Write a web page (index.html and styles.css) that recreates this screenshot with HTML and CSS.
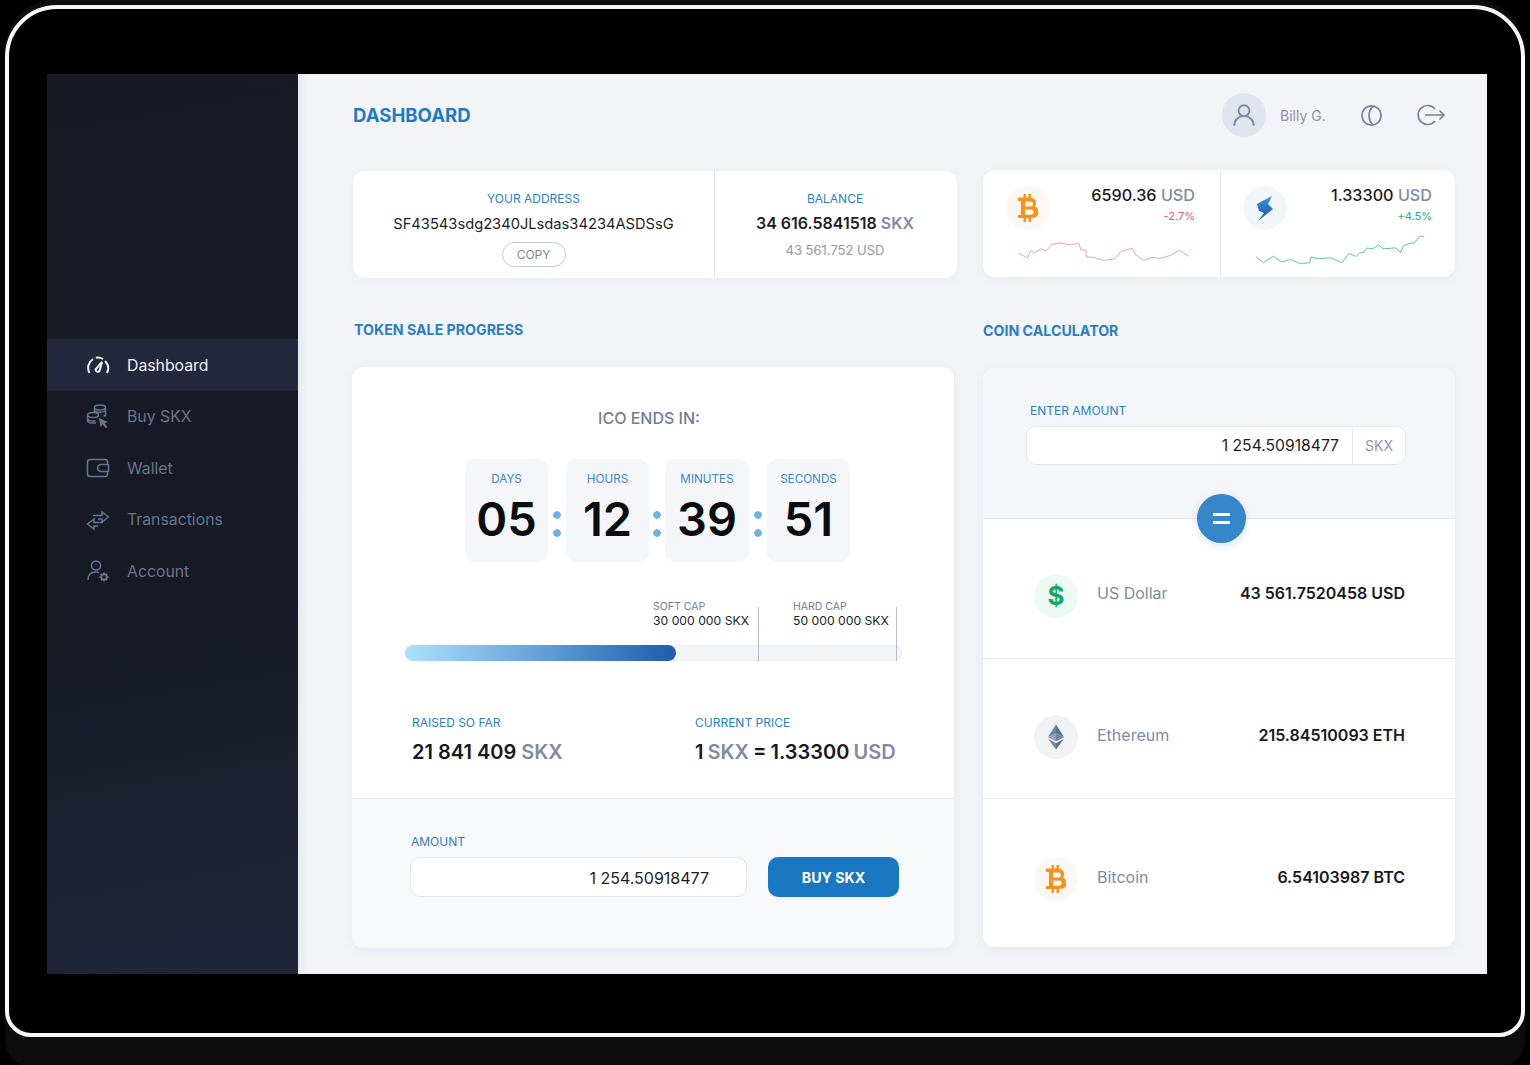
FILE: index.html
```html
<!DOCTYPE html>
<html lang="en">
<head>
<meta charset="utf-8">
<title>Dashboard</title>
<link rel="stylesheet" href="styles.css">
</head>
<body>
<div class="device">
  <div class="screen">
    <aside class="sidebar">
      <nav class="nav">
        <a class="nav-item active">
          <svg class="nav-icon nav-gauge" viewBox="0 0 24 24"><path d="M3.500 20A10.500 10.500 0 0 1 7 6M9.800 4.800a10.500 10.500 0 0 1 7.200 1.200M19 8a10.500 10.500 0 0 1 2 12"/><path d="M9.500 16.500 16 9l-2.500 9a2.300 2.300 0 0 1-4-1.500z"/></svg>
          <span>Dashboard</span>
        </a>
        <a class="nav-item">
          <svg class="nav-icon" viewBox="0 0 24 24"><ellipse cx="14" cy="3.500" rx="5.500" ry="2.500"/><path d="M8.500 3.500v5M19.500 3.500v9M8.500 7c1 1.500 8 2 11 0M19.500 11c-.5.5-1 1-2 1"/><ellipse cx="7" cy="11" rx="5.500" ry="2.500"/><path d="M1.500 11v5.500c0 1.500 2.500 2.500 5.500 2.500h3M1.500 14.500c0 1.500 3 2.500 6 2.500h2"/><path class="fill" d="m13 14 9 4-3.500 1.200 3 3.800-2 1.200-2.700-3.900L14.500 23z"/></svg>
          <span>Buy SKX</span>
        </a>
        <a class="nav-item">
          <svg class="nav-icon" viewBox="0 0 24 24"><path d="M21.500 8V6a2.500 2.500 0 0 0-2.500-2.500H4A2.500 2.500 0 0 0 1.500 6v12A2.500 2.500 0 0 0 4 20.500h15a2.500 2.500 0 0 0 2.500-2.500v-2"/><path d="M22.500 8.500H15a3.200 3.200 0 0 0 0 7h7.500z"/></svg>
          <span>Wallet</span>
        </a>
        <a class="nav-item">
          <svg class="nav-icon" viewBox="0 0 24 24"><path d="M7 8.500h9V5l6.500 5-6.500 5v-3h-4"/><path d="M17 15.500H8V12l-6.500 5L8 22v-3h4"/></svg>
          <span>Transactions</span>
        </a>
        <a class="nav-item">
          <svg class="nav-icon" viewBox="0 0 24 24"><circle cx="10" cy="6.500" r="4.500"/><path d="M2 21c0-5 3-8 8-8 1 0 2 .2 3 .5"/><circle class="thick" cx="18" cy="18" r="2.700"/><path class="thick" d="M18 13.500v2M18 20.500v2M13.500 18h2M20.500 18h2M14.800 14.800l1.400 1.400M19.800 19.800l1.400 1.400M14.800 21.200l1.400-1.400M19.800 16.200l1.400-1.400"/></svg>
          <span>Account</span>
        </a>
      </nav>
    </aside>
    <main class="main">
      <header class="topbar">
        <h1 class="page-title">DASHBOARD</h1>
        <div class="user">
          <span class="avatar">
            <svg viewBox="0 0 24 24" class="avatar-icon"><circle cx="12" cy="8" r="5"/><path d="M3 22c0-5.500 4-9 9-9s9 3.500 9 9"/></svg>
          </span>
          <span class="user-name">Billy G.</span>
          <svg class="moon" viewBox="0 0 24 24"><circle cx="12" cy="12" r="10"/><path d="M14 2.300c-6 3.500-6 16 0 19.400"/></svg>
          <svg class="logout" viewBox="0 0 30 22"><path d="M19 5A9.500 9.500 0 1 0 19 17"/><path d="M9 11h19M23.500 6.500 28 11l-4.500 4.500"/></svg>
        </div>
      </header>

      <div class="columns">
        <section class="col">
          <div class="card address-card">
            <div class="addr-cell addr-wide">
              <div class="label">YOUR ADDRESS</div>
              <div class="address">SF43543sdg2340JLsdas34234ASDSsG</div>
              <button class="copy">COPY</button>
            </div>
            <div class="addr-cell addr-narrow">
              <div class="label">BALANCE</div>
              <div class="balance">34 616.5841518 <span class="muted">SKX</span></div>
              <div class="balance-usd">43 561.752 USD</div>
            </div>
          </div>

          <h2 class="section-title left-title">TOKEN SALE PROGRESS</h2>

          <div class="panel sale-panel">
            <div class="sale-top">
              <div class="ends">ICO ENDS IN:</div>
              <div class="countdown">
                <div class="time-box"><span class="time-label">DAYS</span><span class="time-value">05</span></div>
                <span class="colon"></span>
                <div class="time-box"><span class="time-label">HOURS</span><span class="time-value">12</span></div>
                <span class="colon colon-tight"></span>
                <div class="time-box time-box-wide"><span class="time-label">MINUTES</span><span class="time-value">39</span></div>
                <span class="colon"></span>
                <div class="time-box"><span class="time-label">SECONDS</span><span class="time-value">51</span></div>
              </div>
              <div class="progress">
                <div class="caps">
                  <div class="cap cap-soft"><span class="cap-label">SOFT CAP</span><span class="cap-value">30 000 000 SKX</span></div>
                  <div class="cap cap-hard"><span class="cap-label">HARD CAP</span><span class="cap-value">50 000 000 SKX</span></div>
                </div>
                <div class="bar"><div class="bar-fill"></div></div>
              </div>
              <div class="stats">
                <div class="stat stat-raised">
                  <div class="label">RAISED SO FAR</div>
                  <div class="stat-value">21 841 409 <span class="muted">SKX</span></div>
                </div>
                <div class="stat stat-price">
                  <div class="label">CURRENT PRICE</div>
                  <div class="stat-value">1 <span class="muted">SKX</span> = 1.33300 <span class="muted">USD</span></div>
                </div>
              </div>
            </div>
            <div class="buy">
              <div class="label">AMOUNT</div>
              <div class="buy-row">
                <div class="amount-input">1 254.50918477</div>
                <button class="buy-btn">BUY SKX</button>
              </div>
            </div>
          </div>
        </section>

        <section class="col">
          <div class="card rates-card">
            <div class="rate rate-btc">
              <div class="rate-head">
                <span class="coin coin-btc"><svg class="btc" viewBox="0 0 20 28"><path fill-rule="evenodd" d="M5.500 0H8v3.500h2.500V0H13v3.800a5.300 5.300 0 0 1 3.800 8.700 5.700 5.700 0 0 1-3.800 11V28h-2.500v-4H8v4H5.500v-4H0v-3h3V7H0V3.500h5.500zM7 7.500v5h5.500a2.500 2.500 0 0 0 0-5zM7 15.500v5.200h6a2.600 2.600 0 0 0 0-5.200z"/></svg></span>
                <div class="rate-text">
                  <div class="rate-value">6590.36 <span class="muted">USD</span></div>
                  <div class="rate-change down">-2.7%</div>
                </div>
              </div>
              <svg class="spark spark-btc" viewBox="100 225 550 70"><polyline points="115,265 140,280 150,258 162,264 180,252 197,258 215,238 240,234 275,240 297,234 303,255 318,256 320,277 340,277 370,287 405,283 425,260 460,250 470,270 495,287 520,278 545,281 575,272 603,257 632,274"/></svg>
            </div>
            <div class="rate rate-skx">
              <div class="rate-head">
                <span class="coin coin-skx"><svg class="bolt" viewBox="0 0 16 25"><defs><linearGradient id="boltg" x1="0" y1="0" x2="0" y2="1"><stop offset="0" stop-color="#3a9ae0"/><stop offset="1" stop-color="#1b4f9c"/></linearGradient></defs><path fill="url(#boltg)" d="M15 0 0 8l2 7 5 2-6 8 15-12-5-5z"/></svg></span>
                <div class="rate-text">
                  <div class="rate-value">1.33300 <span class="muted">USD</span></div>
                  <div class="rate-change up">+4.5%</div>
                </div>
              </div>
              <svg class="spark spark-skx" viewBox="150 460 540 100"><polyline points="165,532 188,550 218,530 243,548 270,540 300,553 328,550 332,533 355,538 390,535 425,550 447,522 468,531 480,520 493,518 500,506 520,507 538,496 550,508 590,505 603,520 612,500 628,492 645,490 662,470 675,470"/></svg>
            </div>
          </div>

          <h2 class="section-title right-title">COIN CALCULATOR</h2>

          <div class="panel calc-panel">
            <div class="calc-top">
              <div class="label calc-label">ENTER AMOUNT</div>
              <div class="calc-input"><span class="calc-number">1 254.50918477</span><span class="calc-unit">SKX</span></div>
              <span class="equals"><span class="eq-line"></span><span class="eq-line"></span></span>
            </div>
            <div class="calc-row calc-row-usd">
              <span class="coin coin-usd">$</span>
              <span class="calc-name">US Dollar</span>
              <span class="calc-value">43 561.7520458 USD</span>
            </div>
            <div class="calc-row calc-row-eth">
              <span class="coin coin-eth"><svg class="eth" viewBox="0 0 18 28"><path fill="#6d86a3" d="M9 0 0 14l9-4z"/><path fill="#58718f" d="m9 0 9 14-9-4z"/><path fill="#8ea3bb" d="m9 10-9 4 9 5z"/><path fill="#6d86a3" d="m9 10 9 4-9 5z"/><path fill="#6d86a3" d="m0 16 9 12v-7z"/><path fill="#58718f" d="m18 16-9 12v-7z"/></svg></span>
              <span class="calc-name">Ethereum</span>
              <span class="calc-value">215.84510093 ETH</span>
            </div>
            <div class="calc-row calc-row-last">
              <span class="coin coin-btc"><svg class="btc" viewBox="0 0 20 28"><path fill-rule="evenodd" d="M5.500 0H8v3.500h2.500V0H13v3.800a5.300 5.300 0 0 1 3.800 8.700 5.700 5.700 0 0 1-3.800 11V28h-2.500v-4H8v4H5.500v-4H0v-3h3V7H0V3.500h5.500zM7 7.500v5h5.500a2.500 2.500 0 0 0 0-5zM7 15.500v5.200h6a2.600 2.600 0 0 0 0-5.200z"/></svg></span>
              <span class="calc-name">Bitcoin</span>
              <span class="calc-value">6.54103987 BTC</span>
            </div>
          </div>
        </section>
      </div>
    </main>
  </div>
</div>
</body>
</html>
```
FILE: styles.css
```css
* { box-sizing: border-box; }
html, body { margin: 0; height: 100%; }
body {
  background: #000;
  font-family: "Inter", "Liberation Sans", sans-serif;
  color: #14161c;
  overflow: hidden;
}
.device {
  margin: 5px 0 0 5px;
  width: 1520px;
  height: 1032px;
  background: #000;
  border: 4px solid #f7f7f7;
  border-radius: 52px 52px 26px 26px;
  box-shadow: 0 30px 0 #0c0c0c, 0 -6px 0 #0d0d0d;
  padding: 65px 0 0 38px;
}
.screen { display: flex; width: 1440px; height: 900px; }

.sidebar {
  width: 251px;
  flex: none;
  position: relative;
  z-index: 1;
  background: linear-gradient(170deg, #161922 0%, #181b26 60%, #20253a 100%);
  box-shadow: 3px 0 10px rgba(30, 35, 60, .07);
  padding-top: 265px;
}
.nav { display: flex; flex-direction: column; }
.nav-item {
  display: flex;
  align-items: center;
  height: 51.500px;
  padding-left: 39px;
  gap: 17px;
  font-size: 15.800px;
  color: #66748f;
}
.nav-item span { padding-top: 1px; }
.nav-item.active { background: #23283c; color: #eef0f5; }
.nav-icon {
  width: 24px;
  height: 24px;
  fill: none;
  stroke: currentColor;
  stroke-width: 1.500;
  flex: none;
}
.nav-gauge { stroke-width: 2; }
.nav-icon .fill { fill: currentColor; stroke: none; }
.nav-icon .thick { stroke-width: 1.800; }

.main {
  flex: 1;
  background: #f3f4f8;
  padding-left: 55px;
}
.topbar {
  height: 96px;
  width: 1093px;
  display: flex;
  align-items: center;
  justify-content: space-between;
  padding-bottom: 14px;
}
.page-title {
  margin: 0;
  font-size: 18.600px;
  font-weight: 700;
  color: #1f7cc4;
}
.user { display: flex; align-items: center; }
.avatar {
  width: 44px;
  height: 44px;
  border-radius: 50%;
  background: #e1e4ee;
  display: flex;
  align-items: center;
  justify-content: center;
}
.avatar-icon { width: 26px; height: 26px; fill: none; stroke: #7f8ba3; stroke-width: 1.800; }
.user-name { margin-left: 14px; font-size: 14px; color: #8a94a8; width: 77px; }
.moon { width: 23px; height: 23px; fill: none; stroke: #76839b; stroke-width: 1.800; margin-left: 3px; }
.logout { width: 30px; height: 22px; fill: none; stroke: #76839b; stroke-width: 1.600; margin-left: 33px; }

.columns { display: grid; grid-template-columns: 604px 472px; column-gap: 26px; }
.col { display: flex; flex-direction: column; }
.card {
  background: #fff;
  border-radius: 12px;
  box-shadow: 0 2px 8px rgba(120, 130, 160, .08);
  display: flex;
}
.address-card { height: 107px; margin-top: 1px; }
.addr-cell {
  display: flex;
  flex-direction: column;
  align-items: center;
  padding-top: 20px;
}
.addr-wide { width: 362px; border-right: 1px solid #e6e8ee; }
.addr-narrow { flex: 1; padding-right: 2px; }
.label { font-size: 12px; line-height: 15px; color: #2a7fc4; }
.address { font-size: 14.700px; line-height: 20px; margin-top: 8px; color: #1c1e25; }
.copy {
  margin-top: 8px;
  width: 64px;
  height: 25px;
  border: 1px solid #c5cad5;
  border-radius: 13px;
  background: #fff;
  color: #7d879b;
  font: 12px "Inter", sans-serif;
  padding: 0;
}
.balance { font-size: 16px; line-height: 22px; font-weight: 600; margin-top: 6px; color: #1c1e25; }
.muted { color: #7f8ba1; }
.balance-usd { font-size: 13px; line-height: 18px; margin-top: 7px; color: #8f98aa; }

.section-title {
  margin: 0;
  font-size: 14.200px;
  line-height: 18px;
  font-weight: 700;
  color: #2a7fc4;
}
.left-title { height: 89px; padding: 43px 0 0 1px; }
.right-title { height: 91px; padding: 45px 0 0 0; }

.panel {
  background: #fff;
  border-radius: 12px;
  box-shadow: 0 3px 12px rgba(120, 130, 160, .1);
  overflow: hidden;
}
.sale-panel {
  width: 602px;
  height: 581px;
  margin-left: -1px;
  display: flex;
  flex-direction: column;
}
.sale-top { height: 432px; padding-top: 40px; border-bottom: 1px solid #e4e6ec; flex: none; }
.ends { text-align: center; font-size: 16px; line-height: 22px; font-weight: 500; color: #6f7d95; padding-right: 8px; }
.countdown { display: flex; margin: 30px 0 0 113px; align-items: flex-start; }
.time-box {
  width: 83px;
  height: 103px;
  background: #f4f6f9;
  border-radius: 10px;
  display: flex;
  flex-direction: column;
  align-items: center;
  padding-top: 12px;
}
.time-box-wide { width: 84px; }
.time-label { font-size: 11.700px; line-height: 16px; color: #3e86c4; white-space: nowrap; }
.time-value { font-size: 47px; line-height: 56px; font-weight: 600; color: #0b0c10; margin-top: 4px; }
.colon {
  width: 18px;
  height: 30px;
  margin-top: 52px;
  background:
    radial-gradient(circle at 9px 4px, #6db3e2 3.500px, transparent 4px),
    radial-gradient(circle at 9px 22px, #6db3e2 3.500px, transparent 4px);
}
.colon-tight { width: 16px; background-position: -1px 0; }

.progress { margin: 45px 0 0 53px; width: 497px; }
.caps { display: flex; position: relative; z-index: 1; margin-bottom: -16px; padding-left: 248px; }
.cap { height: 54px; display: flex; flex-direction: column; border-right: 1px solid #b9bfcc; }
.cap-soft { width: 106px; }
.cap-hard { width: 138px; padding-left: 34px; }
.cap-label { font-size: 10.500px; line-height: 13px; color: #6f7d95; margin-top: -7px; }
.cap-value { font-size: 12.200px; line-height: 16px; color: #1c1e25; white-space: nowrap; }
.bar { height: 16px; background: #f3f4f7; border-radius: 8px; box-shadow: inset 0 0 0 1px #eceef2; }
.bar-fill {
  width: 271px;
  height: 16px;
  border-radius: 8px;
  background: linear-gradient(90deg, #aee0fc 0%, #6ba7dc 45%, #1f5cab 100%);
}

.stats { display: flex; margin-top: 54px; padding-left: 60px; }
.stat-raised { width: 283px; }
.stat-value { font-size: 20px; line-height: 28px; font-weight: 600; margin-top: 8px; color: #17191f; white-space: nowrap; }
.stat-price .stat-value { word-spacing: -1px; }

.buy { flex: 1; background: #f7f8fa; padding: 35px 0 0 58px; }
.buy .label { margin: 0 0 8px 1px; }
.buy-row { display: flex; align-items: center; }
.amount-input {
  width: 337px;
  height: 40px;
  background: #fff;
  border: 1px solid #e4e6ec;
  border-radius: 10px;
  font-size: 16px;
  line-height: 40px;
  text-align: right;
  padding-right: 37px;
  color: #1c1e25;
}
.buy-btn {
  width: 131px;
  height: 40px;
  margin-left: 21px;
  background: #1a78c2;
  color: #fff;
  font: 700 14.200px "Inter", sans-serif;
  border: 0;
  border-radius: 10px;
  padding: 0;
}

.rates-card { height: 107px; }
.rate { padding-top: 16px; }
.rate-btc { width: 238px; border-right: 1px solid #e6e8ee; }
.rate-skx { flex: 1; }
.rate-head { display: flex; align-items: flex-start; }
.rate-btc .rate-head { padding: 0 25px 0 23px; }
.rate-skx .rate-head { padding: 0 23px 0 22px; }
.rate-text { flex: 1; text-align: right; }
.rate-value { font-size: 16.200px; line-height: 20px; font-weight: 500; color: #17191f; margin-top: -1px; white-space: nowrap; }
.rate-change { font-size: 11px; line-height: 14px; margin-top: 4px; }
.down { color: #e8557f; }
.up { color: #1ab27a; }
.coin {
  width: 44px;
  height: 44px;
  border-radius: 50%;
  display: flex;
  align-items: center;
  justify-content: center;
  flex: none;
}
.coin-btc { background: #fcf7f2; }
.coin-skx { background: #f1f6fb; }
.coin-eth { background: #f1f2f4; }
.coin-usd { background: #edfaf4; color: #12a868; font-size: 26px; font-weight: 700; }
.btc { width: 20px; height: 28px; fill: #f7931a; }
.bolt { width: 16px; height: 25px; }
.eth { width: 16px; height: 26px; }
.spark { display: block; fill: none; stroke-width: 3; }
.spark-btc { width: 183px; height: 23px; margin: 10px 0 0 30px; stroke: #eda0b6; }
.spark-skx { width: 180px; height: 33px; margin: 3px 0 0 29px; stroke: #5fc4a0; }

.calc-panel { height: 579px; display: flex; flex-direction: column; position: relative; }
.calc-top {
  height: 151px;
  background: #f5f6f9;
  border-bottom: 1px solid #e4e6ec;
  padding: 35px 0 0 43px;
  flex: none;
}
.calc-label { padding-left: 4px; margin-bottom: 8px; }
.calc-input {
  display: flex;
  width: 380px;
  height: 39px;
  background: #fff;
  border: 1px solid #e4e6ec;
  border-radius: 10px;
  align-items: center;
}
.calc-number { flex: 1; text-align: right; font-size: 15.700px; padding-right: 13px; color: #1c1e25; }
.calc-unit {
  width: 53px;
  height: 100%;
  border-left: 1px solid #e4e6ec;
  color: #8f98aa;
  font-size: 14px;
  line-height: 37px;
  text-align: center;
}
.equals {
  position: absolute;
  left: 214px;
  top: 126px;
  width: 49px;
  height: 49px;
  border-radius: 50%;
  background: #3686c9;
  box-shadow: 0 3px 8px rgba(54, 134, 201, .2);
  display: flex;
  flex-direction: column;
  align-items: center;
  justify-content: center;
  gap: 5px;
}
.eq-line { width: 17px; height: 3px; background: #fff; }
.calc-row {
  height: 140px;
  display: flex;
  align-items: center;
  padding: 14px 50px 0 51px;
  border-bottom: 1px solid #e9ebf0;
  flex: none;
}
.calc-row-eth { padding-top: 16px; }
.calc-row-last { border-bottom: 0; height: 148px; padding-top: 14px; }
.calc-row-last .coin { margin-top: -2px; }
.calc-name { margin: -4px 0 0 19px; font-size: 16px; color: #808ca2; }
.calc-value { margin: -4px 0 0 auto; font-size: 16px; font-weight: 600; color: #17191f; }
.calc-row-usd .calc-name, .calc-row-usd .calc-value,
.calc-row-last .calc-name, .calc-row-last .calc-value { margin-top: -6px; }
```
